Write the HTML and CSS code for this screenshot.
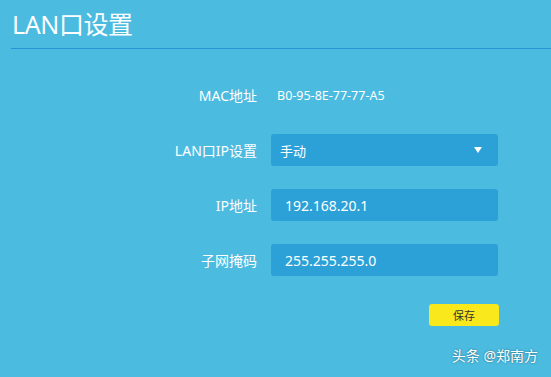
FILE: index.html
```html
<!DOCTYPE html>
<html lang="zh-CN">
<head>
    <meta charset="UTF-8">
    <meta name="viewport" content="width=device-width, initial-scale=1.0">
    <title>LAN口设置</title>
    <link rel="stylesheet" href="styles.css">
</head>
<body>
    <div class="page">
        <h1 class="title">LAN口设置</h1>

        <form class="lan-form">
            <div class="row">
                <span class="label">MAC地址</span>
                <span class="mac">B0-95-8E-77-77-A5</span>
            </div>
            <div class="row">
                <span class="label">LAN口IP设置</span>
                <div class="field select">
                    <span>手动</span>
                    <span class="arrow"></span>
                </div>
            </div>
            <div class="row">
                <span class="label">IP地址</span>
                <div class="field input">192.168.20.1</div>
            </div>
            <div class="row">
                <span class="label">子网掩码</span>
                <div class="field input">255.255.255.0</div>
            </div>
            <div class="actions">
                <button type="button" class="save-btn">保存</button>
            </div>
        </form>

        <!-- watermark -->
        <div class="watermark">头条 @郑南方</div>
    </div>
</body>
</html>
```

FILE: styles.css
```css
body {
    margin: 0;
    background-color: #4bbbe0;
    color: #fff;
    font-family: "Noto Sans", "Noto Sans CJK SC", sans-serif;
}

.page {
    position: relative;
    width: 551px;
    height: 377px;
    overflow: hidden;
}

.title {
    margin: 0 0 0 11px;
    height: 49px;
    padding-left: 1px;
    font-size: 25px;
    font-weight: normal;
    line-height: 48px;
    letter-spacing: -0.4px;
    border-bottom: 1px solid #2a93d8;
    box-sizing: border-box;
}

.lan-form {
    margin-top: 30px;
    display: flex;
    flex-direction: column;
    gap: 23px;
}

.row {
    display: grid;
    grid-template-columns: 257px 227px;
    column-gap: 14px;
    align-items: center;
    height: 32px;
}

.label {
    text-align: right;
    font-size: 14px;
}

.mac {
    padding-left: 6px;
    font-size: 12.5px;
}

.field {
    height: 32px;
    border-radius: 3px;
    background-color: #2ba1d7;
    box-sizing: border-box;
    display: flex;
    align-items: center;
}

.select {
    padding: 0 16px 0 9px;
    justify-content: space-between;
    font-size: 13px;
}

.arrow {
    width: 0;
    height: 0;
    border-left: 4.5px solid transparent;
    border-right: 4.5px solid transparent;
    border-top: 6px solid #fff;
}

.input {
    padding-left: 14px;
    font-size: 14px;
}

.actions {
    display: flex;
    justify-content: flex-end;
    width: 499px;
    margin-top: 5px;
}

.save-btn {
    width: 70px;
    height: 22px;
    padding: 0;
    border: none;
    border-radius: 3px;
    background-color: #f9e81b;
    color: #333;
    font-family: inherit;
    font-size: 11px;
    cursor: pointer;
}

.watermark {
    position: absolute;
    right: 13px;
    bottom: 12px;
    font-size: 14px;
    color: #fff;
    text-shadow: 0 0 2px rgba(0, 0, 0, 0.5);
}
```
